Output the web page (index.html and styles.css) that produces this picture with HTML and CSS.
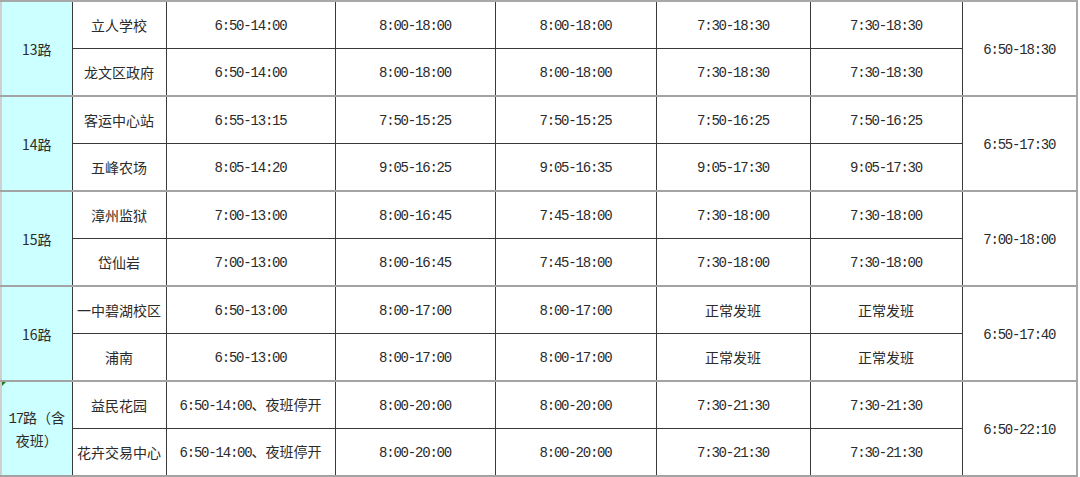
FILE: index.html
```html
<!DOCTYPE html>
<html lang="zh-CN">
<head>
<meta charset="utf-8">
<title>公交线路运营时间</title>
<link rel="stylesheet" href="styles.css">
</head>
<body>
<table class="sched">
  <colgroup>
    <col class="c1"><col class="c2"><col class="c3"><col class="c4"><col class="c5"><col class="c6"><col class="c7"><col class="c8">
  </colgroup>
  <tbody>
    <tr class="g first">
      <td class="route" rowspan="2">13路</td>
      <td>立人学校</td>
      <td><span class="t">6:50-14:00</span></td>
      <td><span class="t">8:00-18:00</span></td>
      <td><span class="t">8:00-18:00</span></td>
      <td><span class="t">7:30-18:30</span></td>
      <td><span class="t">7:30-18:30</span></td>
      <td class="all" rowspan="2"><span class="t">6:50-18:30</span></td>
    </tr>
    <tr>
      <td>龙文区政府</td>
      <td><span class="t">6:50-14:00</span></td>
      <td><span class="t">8:00-18:00</span></td>
      <td><span class="t">8:00-18:00</span></td>
      <td><span class="t">7:30-18:30</span></td>
      <td><span class="t">7:30-18:30</span></td>
    </tr>
    <tr class="g">
      <td class="route" rowspan="2">14路</td>
      <td>客运中心站</td>
      <td><span class="t">6:55-13:15</span></td>
      <td><span class="t">7:50-15:25</span></td>
      <td><span class="t">7:50-15:25</span></td>
      <td><span class="t">7:50-16:25</span></td>
      <td><span class="t">7:50-16:25</span></td>
      <td class="all" rowspan="2"><span class="t">6:55-17:30</span></td>
    </tr>
    <tr>
      <td>五峰农场</td>
      <td><span class="t">8:05-14:20</span></td>
      <td><span class="t">9:05-16:25</span></td>
      <td><span class="t">9:05-16:35</span></td>
      <td><span class="t">9:05-17:30</span></td>
      <td><span class="t">9:05-17:30</span></td>
    </tr>
    <tr class="g">
      <td class="route" rowspan="2">15路</td>
      <td>漳州监狱</td>
      <td><span class="t">7:00-13:00</span></td>
      <td><span class="t">8:00-16:45</span></td>
      <td><span class="t">7:45-18:00</span></td>
      <td><span class="t">7:30-18:00</span></td>
      <td><span class="t">7:30-18:00</span></td>
      <td class="all" rowspan="2"><span class="t">7:00-18:00</span></td>
    </tr>
    <tr>
      <td>岱仙岩</td>
      <td><span class="t">7:00-13:00</span></td>
      <td><span class="t">8:00-16:45</span></td>
      <td><span class="t">7:45-18:00</span></td>
      <td><span class="t">7:30-18:00</span></td>
      <td><span class="t">7:30-18:00</span></td>
    </tr>
    <tr class="g">
      <td class="route" rowspan="2">16路</td>
      <td>一中碧湖校区</td>
      <td><span class="t">6:50-13:00</span></td>
      <td><span class="t">8:00-17:00</span></td>
      <td><span class="t">8:00-17:00</span></td>
      <td>正常发班</td>
      <td>正常发班</td>
      <td class="all" rowspan="2"><span class="t">6:50-17:40</span></td>
    </tr>
    <tr>
      <td>浦南</td>
      <td><span class="t">6:50-13:00</span></td>
      <td><span class="t">8:00-17:00</span></td>
      <td><span class="t">8:00-17:00</span></td>
      <td>正常发班</td>
      <td>正常发班</td>
    </tr>
    <tr class="g">
      <td class="route marked" rowspan="2"><span class="t">17</span>路（含<br>夜班）</td>
      <td>益民花园</td>
      <td><span class="t">6:50-14:00</span>、夜班停开</td>
      <td><span class="t">8:00-20:00</span></td>
      <td><span class="t">8:00-20:00</span></td>
      <td><span class="t">7:30-21:30</span></td>
      <td><span class="t">7:30-21:30</span></td>
      <td class="all" rowspan="2"><span class="t">6:50-22:10</span></td>
    </tr>
    <tr class="last">
      <td>花卉交易中心</td>
      <td><span class="t">6:50-14:00</span>、夜班停开</td>
      <td><span class="t">8:00-20:00</span></td>
      <td><span class="t">8:00-20:00</span></td>
      <td><span class="t">7:30-21:30</span></td>
      <td><span class="t">7:30-21:30</span></td>
    </tr>
  </tbody>
</table>
</body>
</html>
```

FILE: styles.css
```css
html, body {
  margin: 0;
  padding: 0;
  background: #ffffff;
}

.sched {
  border-collapse: collapse;
  table-layout: fixed;
  width: 1078px;
  font-family: "Noto Sans CJK SC", "Noto Sans CJK TC", sans-serif;
  font-size: 14px;
  color: #2b2b2b;
  border-left: 2px solid #cfcfcf;
  border-right: 2px solid #a8a8a8;
}

.c1 { width: 71px; }
.c2 { width: 94px; }
.c3 { width: 169px; }
.c4 { width: 160px; }
.c5 { width: 161px; }
.c6 { width: 154px; }
.c7 { width: 152px; }
.c8 { width: 115px; }

.sched td {
  height: 46px;
  padding: 0;
  text-align: center;
  vertical-align: middle;
  border: 1px solid #3a3a3a;
  line-height: 20px;
  white-space: nowrap;
}

.sched tr.g td {
  border-top: 2px solid #a3a3a3;
}

.sched tr.last td,
.sched tr.g td.route,
.sched tr.g td.all {
  border-bottom: 2px solid #a3a3a3;
}

.sched tr.first td {
  border-top: 2px solid #a8a8a8;
}

.route {
  background: #ccffff;
  position: relative;
  border-left: 2px solid #cfcfcf;
}

.route.marked {
  white-space: normal;
  line-height: 21px;
}

.route.marked::before {
  content: "";
  position: absolute;
  left: 0;
  top: 0;
  width: 0;
  height: 0;
  border-top: 4px solid #1f7a1f;
  border-right: 4px solid transparent;
}

.t {
  font-family: "Liberation Mono", "DejaVu Sans Mono", monospace;
  font-size: 14px;
  letter-spacing: -1.2px;
}
```
